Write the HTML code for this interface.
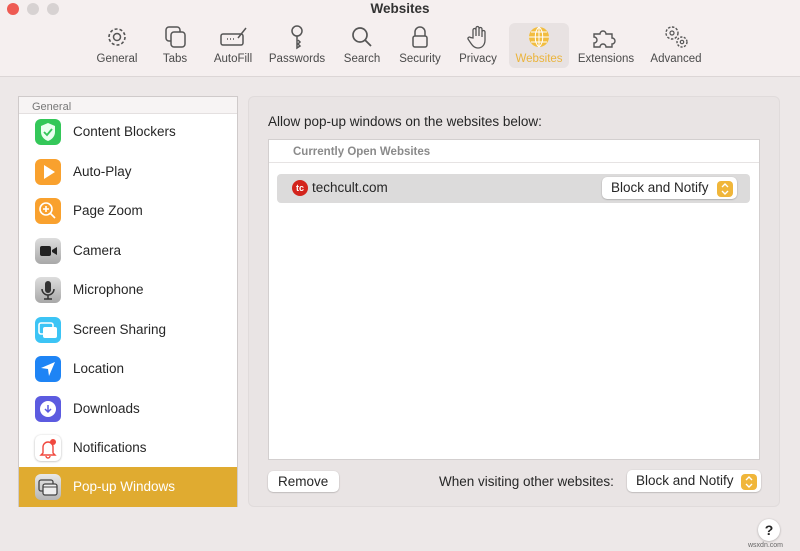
<!DOCTYPE html><html><head><meta charset="utf-8"><style>
*{box-sizing:border-box;margin:0;padding:0}
body{width:800px;height:551px;overflow:hidden;background:#ede8e8;font-family:"Liberation Sans",sans-serif;color:#262626;position:relative;font-size:13px}
.abs{position:absolute}
.tb{left:0;top:0;width:800px;height:77px;background:#f5efef;border-bottom:1px solid #dcd6d6}
.dot{width:12px;height:12px;border-radius:50%;top:3px}
.ti{position:absolute;top:24px;width:70px;text-align:center;font-size:11.5px;color:#4a4a4a}
.ti svg{display:block;margin:0 auto 3px;height:26px}
.side{left:18px;top:96px;width:220px;height:411px;background:#fff;border:1px solid #cfcaca}
.row{position:absolute;left:0;width:218px;height:40px}
.row .ic{position:absolute;left:16px;top:7px;width:26px;height:26px;border-radius:6px}
.row span{position:absolute;left:54px;top:12px;font-size:13.5px}
.btn{background:#fff;border-radius:5px;box-shadow:0 0.5px 1.5px rgba(0,0,0,.3);font-size:13.5px}
.step{position:absolute;right:4px;top:4px;width:16px;height:16px;border-radius:4px;background:#f0b63a}
</style></head><body>
<div class="abs tb"></div>
<div class="abs dot" style="left:7px;background:#ee5a52"></div>
<div class="abs dot" style="left:27px;background:#d7d2d2"></div>
<div class="abs dot" style="left:47px;background:#d7d2d2"></div>
<div class="abs" style="left:0;width:800px;top:1px;text-align:center;font-weight:bold;font-size:13.5px;color:#333">Websites</div>
<div class="abs" style="left:509px;top:23px;width:60px;height:45px;background:#e8e2e2;border-radius:6px"></div>

<div class="ti" style="left:82px"><svg viewBox="0 0 26 26" width="26"><circle cx="13" cy="13" r="8" fill="none" stroke="#555" stroke-width="1.6" stroke-dasharray="3 2"/><circle cx="13" cy="13" r="3.5" fill="none" stroke="#555" stroke-width="1.5"/></svg>General</div>
<div class="ti" style="left:140px"><svg viewBox="0 0 26 26" width="26"><rect x="4" y="3" width="14" height="14" rx="3" fill="none" stroke="#555" stroke-width="1.5"/><rect x="9" y="8" width="14" height="15" rx="3" fill="#f5efef" stroke="#555" stroke-width="1.5"/></svg>Tabs</div>
<div class="ti" style="left:198px"><svg viewBox="0 0 30 26" width="30"><rect x="3" y="10" width="22" height="11" rx="2" fill="none" stroke="#555" stroke-width="1.5"/><path d="M9 15h1M12 15h1M15 15h1M20 14l8-10" stroke="#555" stroke-width="1.5"/></svg>AutoFill</div>
<div class="ti" style="left:262px"><svg viewBox="0 0 26 26" width="26"><circle cx="13" cy="7" r="5" fill="none" stroke="#555" stroke-width="1.5"/><path d="M13 12v12l3-2-2-2 2-2-2-2" fill="none" stroke="#555" stroke-width="1.5"/></svg>Passwords</div>
<div class="ti" style="left:327px"><svg viewBox="0 0 26 26" width="26"><circle cx="11" cy="11" r="7" fill="none" stroke="#555" stroke-width="1.7"/><path d="M16 16l6 6" stroke="#555" stroke-width="1.8"/></svg>Search</div>
<div class="ti" style="left:385px"><svg viewBox="0 0 26 26" width="26"><path d="M8 12V8a5 5 0 0110 0v4" fill="none" stroke="#555" stroke-width="1.5"/><rect x="6" y="12" width="14" height="11" rx="2" fill="none" stroke="#555" stroke-width="1.5"/></svg>Security</div>
<div class="ti" style="left:443px"><svg viewBox="0 0 26 26" width="26"><path d="M8 14V6a1.5 1.5 0 013 0v6V4a1.5 1.5 0 013 0v8V5a1.5 1.5 0 013 0v8V8a1.5 1.5 0 013 0v8c0 5-3 8-7 8s-6-3-8-6l-2-3a1.5 1.5 0 012.5-1.5z" fill="none" stroke="#555" stroke-width="1.3"/></svg>Privacy</div>
<div class="ti" style="left:504px;color:#ebb43c"><svg viewBox="0 0 26 26" width="26"><circle cx="13" cy="13" r="10" fill="#f2bd3f"/><path d="M3 13h20M13 3v20M5 8h16M5 18h16M13 3c-5 4-5 16 0 20M13 3c5 4 5 16 0 20" fill="none" stroke="#fff" stroke-width="1"/></svg>Websites</div>
<div class="ti" style="left:571px"><svg viewBox="0 0 32 26" width="32"><path d="M4 10h6a3 3 0 016 0h6v4a3 3 0 010 6v3h-6a3 3 0 00-6 0H4v-4a3 3 0 000-6z" fill="none" stroke="#555" stroke-width="1.4"/></svg>Extensions</div>
<div class="ti" style="left:641px"><svg viewBox="0 0 30 26" width="30"><circle cx="11" cy="9" r="6" fill="none" stroke="#555" stroke-width="1.4" stroke-dasharray="2.5 1.5"/><circle cx="11" cy="9" r="2" fill="none" stroke="#555" stroke-width="1.2"/><circle cx="21" cy="18" r="5" fill="none" stroke="#555" stroke-width="1.4" stroke-dasharray="2.2 1.4"/><circle cx="21" cy="18" r="1.7" fill="none" stroke="#555" stroke-width="1.2"/></svg>Advanced</div>

<div class="abs side">
<div style="height:17px;border-bottom:1px solid #e4e0e0;font-size:11px;color:#777;padding:4px 0 0 13px;background:#f7f4f4">General</div>
<div class="row" style="top:15px"><div class="ic" style="background:#34c759"><svg viewBox="0 0 26 26" width="26"><path d="M13 4l7 3v6c0 5-4 8-7 9-3-1-7-4-7-9V7z" fill="#eafff0"/><path d="M9 13l3 3 5-6" fill="none" stroke="#34c759" stroke-width="1.8"/></svg></div><span>Content Blockers</span></div>
<div class="row" style="top:55px"><div class="ic" style="background:#f9a12e"><svg viewBox="0 0 26 26" width="26"><path d="M9 6l11 7-11 7z" fill="#fff"/></svg></div><span>Auto-Play</span></div>
<div class="row" style="top:94px"><div class="ic" style="background:#f9a12e"><svg viewBox="0 0 26 26" width="26"><circle cx="11" cy="11" r="6" fill="none" stroke="#fff" stroke-width="1.6"/><path d="M15 15l5 5M8 11h6M11 8v6" stroke="#fff" stroke-width="1.6"/></svg></div><span>Page Zoom</span></div>
<div class="row" style="top:134px"><div class="ic" style="background:linear-gradient(#ddd,#a8a8a8)"><svg viewBox="0 0 26 26" width="26"><rect x="5" y="8" width="11" height="10" rx="2" fill="#222"/><path d="M17 12l5-3v8l-5-3z" fill="#222"/></svg></div><span>Camera</span></div>
<div class="row" style="top:173px"><div class="ic" style="background:linear-gradient(#ddd,#a8a8a8)"><svg viewBox="0 0 26 26" width="26"><rect x="10" y="4" width="6" height="12" rx="3" fill="#333"/><path d="M7 12a6 6 0 0012 0M13 18v4M9 22h8" fill="none" stroke="#333" stroke-width="1.5"/></svg></div><span>Microphone</span></div>
<div class="row" style="top:213px"><div class="ic" style="background:#3cc4f5"><svg viewBox="0 0 26 26" width="26"><rect x="4" y="6" width="14" height="11" rx="2" fill="none" stroke="#fff" stroke-width="1.6"/><rect x="8" y="10" width="14" height="11" rx="2" fill="#fff"/></svg></div><span>Screen Sharing</span></div>
<div class="row" style="top:252px"><div class="ic" style="background:#1e84f5"><svg viewBox="0 0 26 26" width="26"><path d="M20 6L6 12l7 1 1 7z" fill="#fff"/></svg></div><span>Location</span></div>
<div class="row" style="top:292px"><div class="ic" style="background:#5c5be0"><svg viewBox="0 0 26 26" width="26"><circle cx="13" cy="13" r="8" fill="#fff"/><path d="M13 9v7M10 13l3 3 3-3" fill="none" stroke="#5c5be0" stroke-width="1.5"/></svg></div><span>Downloads</span></div>
<div class="row" style="top:331px"><div class="ic" style="background:#fff;box-shadow:0 0.5px 2px rgba(0,0,0,.3)"><svg viewBox="0 0 26 26" width="26"><path d="M8 18v-6a5 5 0 0110 0v6l2 2H6z M11 21a2 2 0 004 0" fill="none" stroke="#f0483e" stroke-width="1.4"/><circle cx="18" cy="7" r="3" fill="#f0483e"/></svg></div><span>Notifications</span></div>
<div class="row" style="top:370px;height:40px;background:#e0ab30"><div class="ic" style="background:linear-gradient(#e8e8e8,#b5b5b5)"><svg viewBox="0 0 26 26" width="26"><rect x="4" y="6" width="14" height="11" rx="2" fill="none" stroke="#444" stroke-width="1.3"/><rect x="8" y="10" width="14" height="11" rx="2" fill="#eee" stroke="#444" stroke-width="1.3"/><path d="M8 13h14" stroke="#444"/></svg></div><span style="color:#fff">Pop-up Windows</span></div>
</div>

<div class="abs" style="left:248px;top:96px;width:532px;height:411px;background:#e9e4e4;border:1px solid #e0dbdb;border-radius:6px"></div>
<div class="abs" style="left:268px;top:114px;font-size:13.5px">Allow pop-up windows on the websites below:</div>
<div class="abs" style="left:268px;top:139px;width:492px;height:321px;background:#fff;border:1px solid #d3cfcf"></div>
<div class="abs" style="left:269px;top:140px;width:490px;height:23px;border-bottom:1px solid #e6e3e3;font-size:11.5px;font-weight:bold;color:#8a8a8a;padding:6px 0 0 24px">Currently Open Websites</div>
<div class="abs" style="left:277px;top:174px;width:473px;height:29px;background:#dcdbdb;border-radius:4px"></div>
<div class="abs" style="left:292px;top:180px;width:16px;height:16px;border-radius:50%;background:#d3241c;color:#fff;font-size:9px;font-weight:bold;text-align:center;line-height:16px">tc</div>
<div class="abs" style="left:312px;top:180px;font-size:13.5px">techcult.com</div>
<div class="abs btn" style="left:602px;top:177px;width:135px;height:22px;padding:3px 0 0 9px">Block and Notify<div class="step"><svg viewBox="0 0 16 16" width="16"><path d="M5 6l3-3 3 3M5 10l3 3 3-3" fill="none" stroke="#fff" stroke-width="1.4"/></svg></div></div>
<div class="abs btn" style="left:268px;top:471px;width:71px;height:21px;padding:3px 0 0 10px">Remove</div>
<div class="abs" style="left:439px;top:474px;font-size:13.5px">When visiting other websites:</div>
<div class="abs btn" style="left:627px;top:470px;width:134px;height:22px;padding:3px 0 0 9px">Block and Notify<div class="step"><svg viewBox="0 0 16 16" width="16"><path d="M5 6l3-3 3 3M5 10l3 3 3-3" fill="none" stroke="#fff" stroke-width="1.4"/></svg></div></div>
<div class="abs" style="left:758px;top:519px;width:22px;height:22px;border-radius:50%;background:#fff;box-shadow:0 0.5px 2px rgba(0,0,0,.3);text-align:center;font-weight:bold;font-size:14px;line-height:22px">?</div>
<div class="abs" style="left:748px;top:542px;font-size:7px;color:#666">wsxdn.com</div>
</body></html>
